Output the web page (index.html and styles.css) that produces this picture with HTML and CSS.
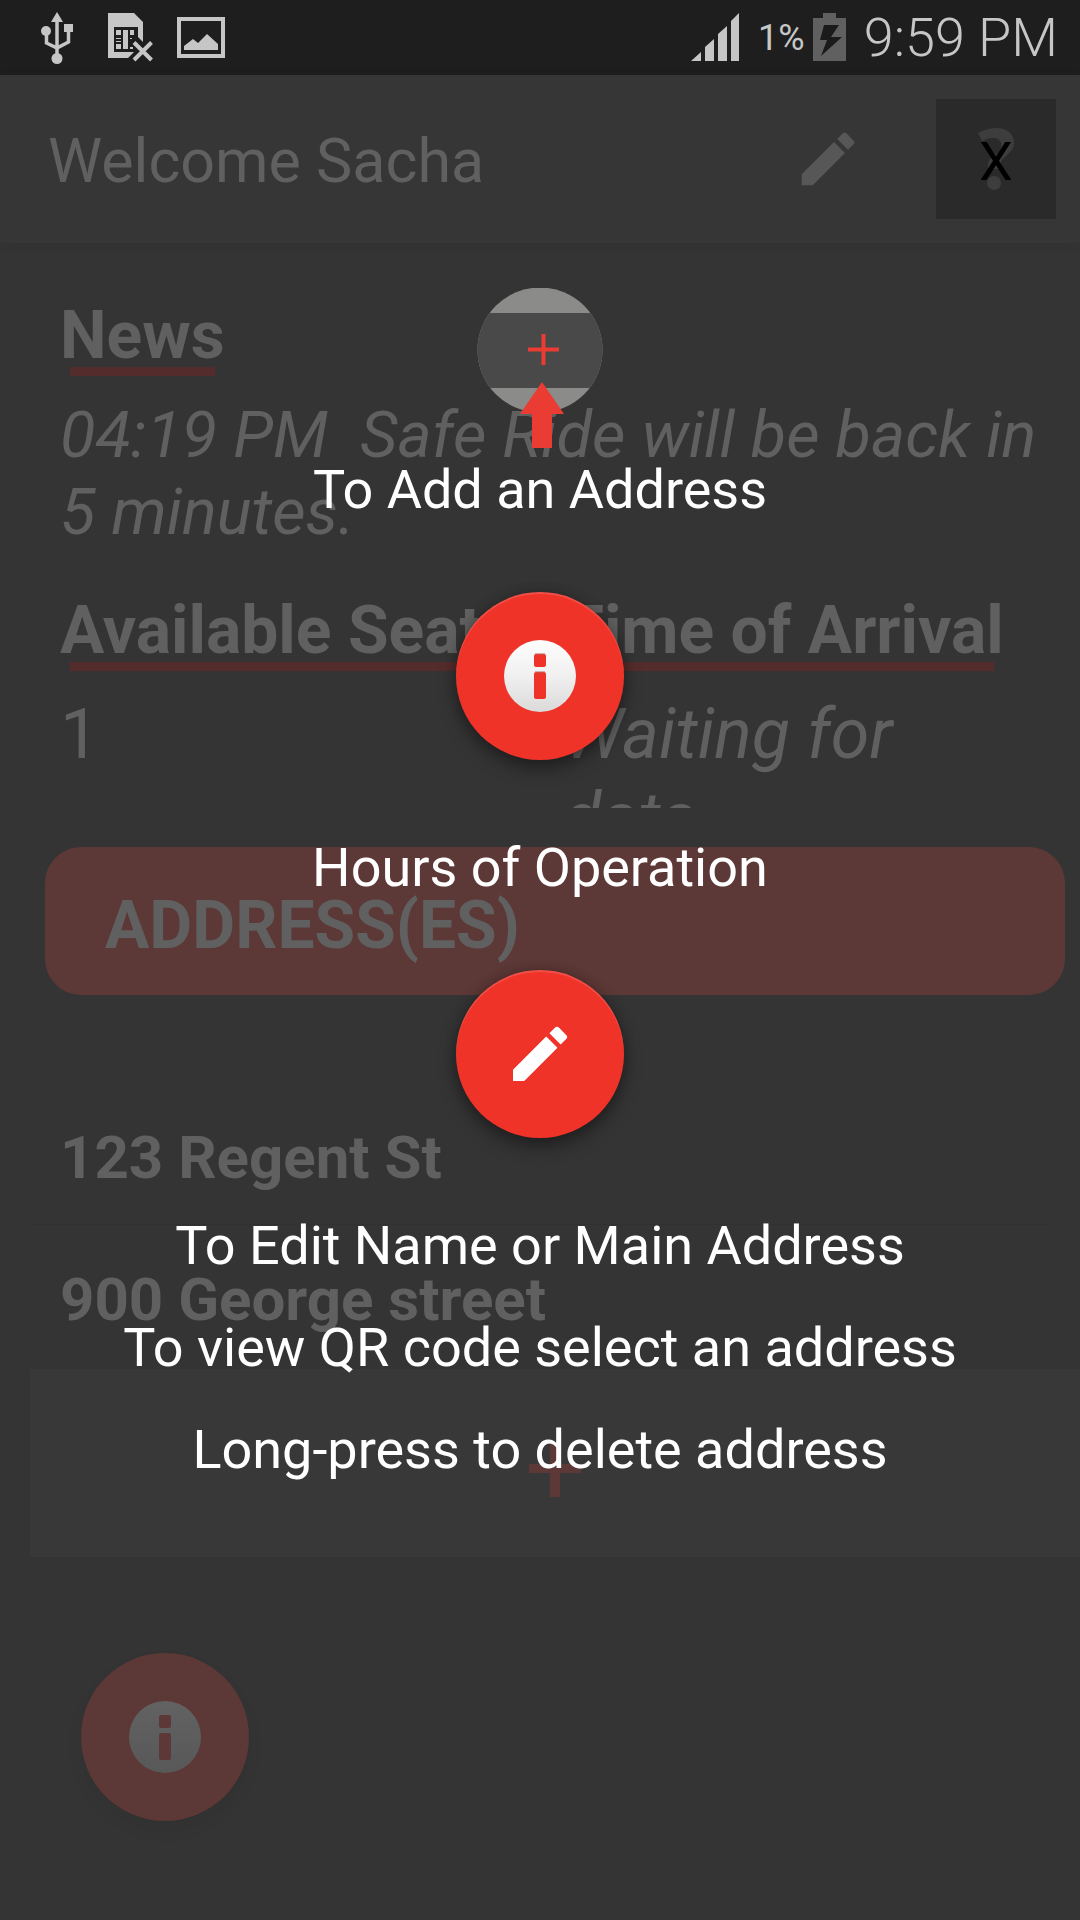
FILE: index.html
```html
<!DOCTYPE html>
<html lang="en">
<head>
<meta charset="utf-8">
<meta name="viewport" content="width=device-width, initial-scale=1">
<title>Safe Ride</title>
<link rel="stylesheet" href="styles.css">
</head>
<body>
<div class="status">
  <div class="status-group status-left">
    <svg class="usb" width="32" height="52" viewBox="0 0 32 52" aria-hidden="true">
      <path d="M16 0l6 10H10zM23 12h9v8h-9z" fill="currentColor"/>
      <circle cx="5" cy="19" r="5" fill="currentColor"/><circle cx="16" cy="46.500" r="5.500" fill="currentColor"/>
      <path d="M16 8v36M5.500 20v11l10.500 5 11.500-6V18" fill="none" stroke="currentColor" stroke-width="3.500"/>
    </svg>
    <svg class="sim" width="46" height="50" viewBox="0 0 46 50" aria-hidden="true">
      <path d="M0 0h26l9 9v20l-5-5V14H6v25h20l-6 6H0z" fill="currentColor"/>
      <path d="M8 17h5v5H8zM15 17h5v19h-5zM22 17h4v5h-4zM8 25h5v1H8zM8 28h5v1H8zM8 31h5v5H8zM22 25h2v1h-2zM22 34h3v2h-3z" fill="currentColor"/>
      <path d="M26 29.500l17.500 17.500M43.500 29.500L26 47" stroke="currentColor" stroke-width="4"/>
    </svg>
    <svg class="pic" width="48" height="41" viewBox="0 0 48 41" aria-hidden="true">
      <path d="M2 2h44v37H2z" fill="none" stroke="currentColor" stroke-width="4"/>
      <path d="M7 33v-4l9-7 5 4 9-9 11 10v6z" fill="currentColor"/>
    </svg>
  </div>
  <div class="status-group status-right">
    <svg class="signal" width="48" height="48" viewBox="0 0 48 48" aria-hidden="true">
      <path d="M0 48l10-9v9zM14 48V34l9-8v22zM27 48V21l9-8v35zM40 48V8l8-8v48z" fill="currentColor"/>
    </svg>
    <span class="percent">1%</span>
    <svg class="battery" width="33" height="48" viewBox="0 0 33 48" aria-hidden="true">
      <path d="M10 0h13v5h10v43H0V5h10z" fill="#606060"/>
      <path d="M11 12h15l-8 12h11L8 43l6-16H7z" fill="#1b1b1b"/>
    </svg>
    <time class="clock">9:59 PM</time>
  </div>
</div>

<div class="screen">
  <header class="appbar">
    <h1 class="title">Welcome Sacha</h1>
    <button class="icon-btn edit" aria-label="Edit">
      <svg width="70" height="70" viewBox="0 0 24 24" fill="#575757"><path d="M3 17.250V21h3.750L17.810 9.940l-3.750-3.750L3 17.250zM20.710 7.040a1 1 0 0 0 0-1.410l-2.340-2.340a1 1 0 0 0-1.410 0l-1.830 1.830 3.750 3.750 1.830-1.830z"/></svg>
    </button>
    <button class="icon-btn help" aria-label="Help">
      <svg width="120" height="120" viewBox="0 0 120 120" fill="#3d3d3d"><path d="M42 34C50 30 56 29 61 29C72 29 78 36 78 44C78 54 67 57 65 63C64 66 64 68 63 70H52C51 59 58 58 62 54C67 49 67 39 57 39C53 39 50 40 46 42Z"/><circle cx="58" cy="84" r="7"/></svg>
    </button>
  </header>

  <main>
    <section class="news">
      <h2 class="heading">News</h2>
      <p class="news-text">04:19 PM  Safe Ride will be back in 5 minutes.</p>
    </section>
    <div class="ride">
      <section>
        <h2 class="heading wide">Available Seats</h2>
        <p class="value">1</p>
      </section>
      <section>
        <h2 class="heading">Time of Arrival</h2>
        <p class="value waiting">Waiting for data</p>
      </section>
    </div>
    <h2 class="bar">ADDRESS(ES)</h2>
    <ul class="addresses">
      <li>123 Regent St</li>
      <li>900 George street</li>
    </ul>
    <button class="add" aria-label="Add address">
      <svg width="52" height="54" viewBox="0 0 52 54"><path d="M21 0h10v21h21v9H31v24H21V30H0v-9h21z" fill="#5c3836"/></svg>
    </button>
    <button class="fab dim" aria-label="Information">
      <svg width="72" height="72" viewBox="0 0 72 72"><defs><linearGradient id="g1" x1="0" y1="0" x2="0" y2="1"><stop offset="0" stop-color="#626262"/><stop offset="1" stop-color="#585858"/></linearGradient></defs><path fill="url(#g1)" fill-rule="evenodd" d="M36 0a36 36 0 1 1 0 72a36 36 0 1 1 0-72zM32 14q-2 0-2 2v9q0 2 2 2h8q2 0 2-2v-9q0-2-2-2zM32 32q-2 0-2 2v23q0 2 2 2h8q2 0 2-2V34q0-2-2-2z"/></svg>
    </button>
  </main>

  <div class="guide" role="dialog" aria-label="Help">
    <button class="close">X</button>
    <svg class="add-hint" width="126" height="160" viewBox="0 0 126 160" aria-hidden="true">
      <defs><clipPath id="disc"><circle cx="63" cy="62" r="62.500"/></clipPath></defs>
      <g clip-path="url(#disc)"><path d="M0 0h126v126H0z" fill="#8b8b89"/><path d="M0 25h126v75H0z" fill="#494949"/></g>
      <path d="M51 61.500h31M66.500 46v31" stroke="#ea3c32" stroke-width="4"/>
      <path d="M65 94l22 32H75v34H55v-34H43z" fill="#ea3c32"/>
    </svg>
    <p class="hint first">To Add an Address</p>
    <button class="fab" aria-label="Hours of Operation">
      <svg width="72" height="72" viewBox="0 0 72 72"><defs><linearGradient id="g2" x1="0" y1="0" x2="0" y2="1"><stop offset="0" stop-color="#fdfdfd"/><stop offset=".5" stop-color="#f0f0f0"/><stop offset="1" stop-color="#dadada"/></linearGradient></defs><path fill="url(#g2)" fill-rule="evenodd" d="M36 0a36 36 0 1 1 0 72a36 36 0 1 1 0-72zM32 14q-2 0-2 2v9q0 2 2 2h8q2 0 2-2v-9q0-2-2-2zM32 32q-2 0-2 2v23q0 2 2 2h8q2 0 2-2V34q0-2-2-2z"/><path d="M31 14h10M31 32h10" stroke="#b5665f" stroke-width="1"/></svg>
    </button>
    <p class="hint">Hours of Operation</p>
    <button class="fab" aria-label="Edit name or address">
      <svg width="72" height="72" viewBox="0 0 24 24" fill="#fff"><path d="M3 17.250V21h3.750L17.810 9.940l-3.750-3.750L3 17.250zM20.710 7.040a1 1 0 0 0 0-1.410l-2.340-2.340a1 1 0 0 0-1.410 0l-1.830 1.830 3.750 3.750 1.830-1.830z"/></svg>
    </button>
    <div class="notes">
      <p>To Edit Name or Main Address</p>
      <p>To view QR code select an address</p>
      <p>Long-press to delete address</p>
    </div>
  </div>
</div>
</body>
</html>
```

FILE: styles.css
```css
* { box-sizing: border-box; }
body {
  margin: 0;
  min-height: 100vh;
  display: flex;
  flex-direction: column;
  background: #343434;
  color: #606060;
  font-family: Roboto, "Noto Sans", sans-serif;
}
h1, h2, p, ul { margin: 0; padding: 0; }
ul { list-style: none; }
svg { display: block; }
button {
  border: 0;
  padding: 0;
  background: none;
  font: inherit;
  display: grid;
  place-items: center;
}

.status {
  height: 75px;
  padding: 0 22px 0 41px;
  display: flex;
  justify-content: space-between;
  background: #1e1e1e;
  color: #c6c6c6;
}
.status-group { display: flex; align-items: center; }
.status-left { gap: 23px; }
.usb { margin-right: 12px; }
.signal { margin-right: 19px; }
.percent { font-size: 36px; line-height: 48px; margin-right: 8px; padding-top: 3px; }
.battery { margin-right: 18px; }
.clock { font-size: 54px; font-weight: 300; line-height: 60px; padding-top: 2px; }
.status-right { padding-bottom: 2px; }

.screen { position: relative; flex: 1; }
.appbar {
  height: 168px;
  padding: 0 24px 0 48px;
  display: flex;
  align-items: center;
  background: #363636;
  box-shadow: 0 2px 12px rgba(0, 0, 0, .06);
}
.title { flex: 1; padding-top: 4px; font-size: 61px; line-height: 72px; font-weight: 400; }
.edit { margin-right: 73px; }
.help { background: #2a2a2a; }

.news { padding: 60px 30px 47px 60px; }
.heading {
  width: fit-content;
  font-size: 66px;
  line-height: 66px;
  font-weight: 700;
  white-space: nowrap;
}
.heading::after {
  content: "";
  display: block;
  height: 9px;
  margin: -2px 10px 0;
  background: #552c2c;
}
.heading.wide { width: 100%; }
.heading.wide::after { margin-right: -10px; }
.news-text {
  margin-top: 21px;
  font-size: 65px;
  line-height: 77px;
  font-style: italic;
  white-space: pre-wrap;
}
.ride {
  padding: 0 60px;
  display: grid;
  grid-template-columns: 503px 1fr;
}
.value {
  height: 116px;
  margin-top: 21px;
  overflow: hidden;
  font-size: 70px;
  line-height: 84px;
}
.waiting { font-style: italic; }
.bar {
  margin: 39px 15px 0 45px;
  padding: 40px 60px 31px;
  border-radius: 36px;
  background: #5c3836;
  font-size: 66px;
  line-height: 77px;
  font-weight: 700;
}
.addresses { margin: 88px 30px 0; }
.addresses li {
  padding: 40px 30px 32px;
  font-size: 60px;
  line-height: 70px;
  font-weight: 700;
}
.addresses li + li { box-shadow: 0 -1px #313131; }
.add {
  width: calc(100% - 30px);
  height: 188px;
  margin: 2px 0 0 30px;
  padding-top: 14px;
  background: #383838;
}
.fab {
  width: 168px;
  height: 168px;
  border-radius: 50%;
  background: #ef3329;
  box-shadow: 0 9px 18px rgba(0, 0, 0, .35), 0 0 12px rgba(0, 0, 0, .2), inset 0 2px 1px rgba(255, 255, 255, .15);
}
.fab.dim {
  margin: 96px 81px 99px;
  background: #5c3836;
  box-shadow: 0 9px 18px rgba(0, 0, 0, .05);
}

.guide {
  position: absolute;
  inset: 0;
  padding-top: 213px;
  display: flex;
  flex-direction: column;
  align-items: center;
  color: #fff;
  font-size: 54px;
  line-height: 64px;
  text-align: center;
}
.close {
  position: absolute;
  top: 24px;
  right: 24px;
  width: 120px;
  height: 120px;
  padding-top: 5px;
  color: #000;
}
.hint { margin: 76px 0 70px; }
.hint.first { margin-top: 10px; }
.notes {
  margin-top: 76px;
  display: grid;
  gap: 38px;
}
```
